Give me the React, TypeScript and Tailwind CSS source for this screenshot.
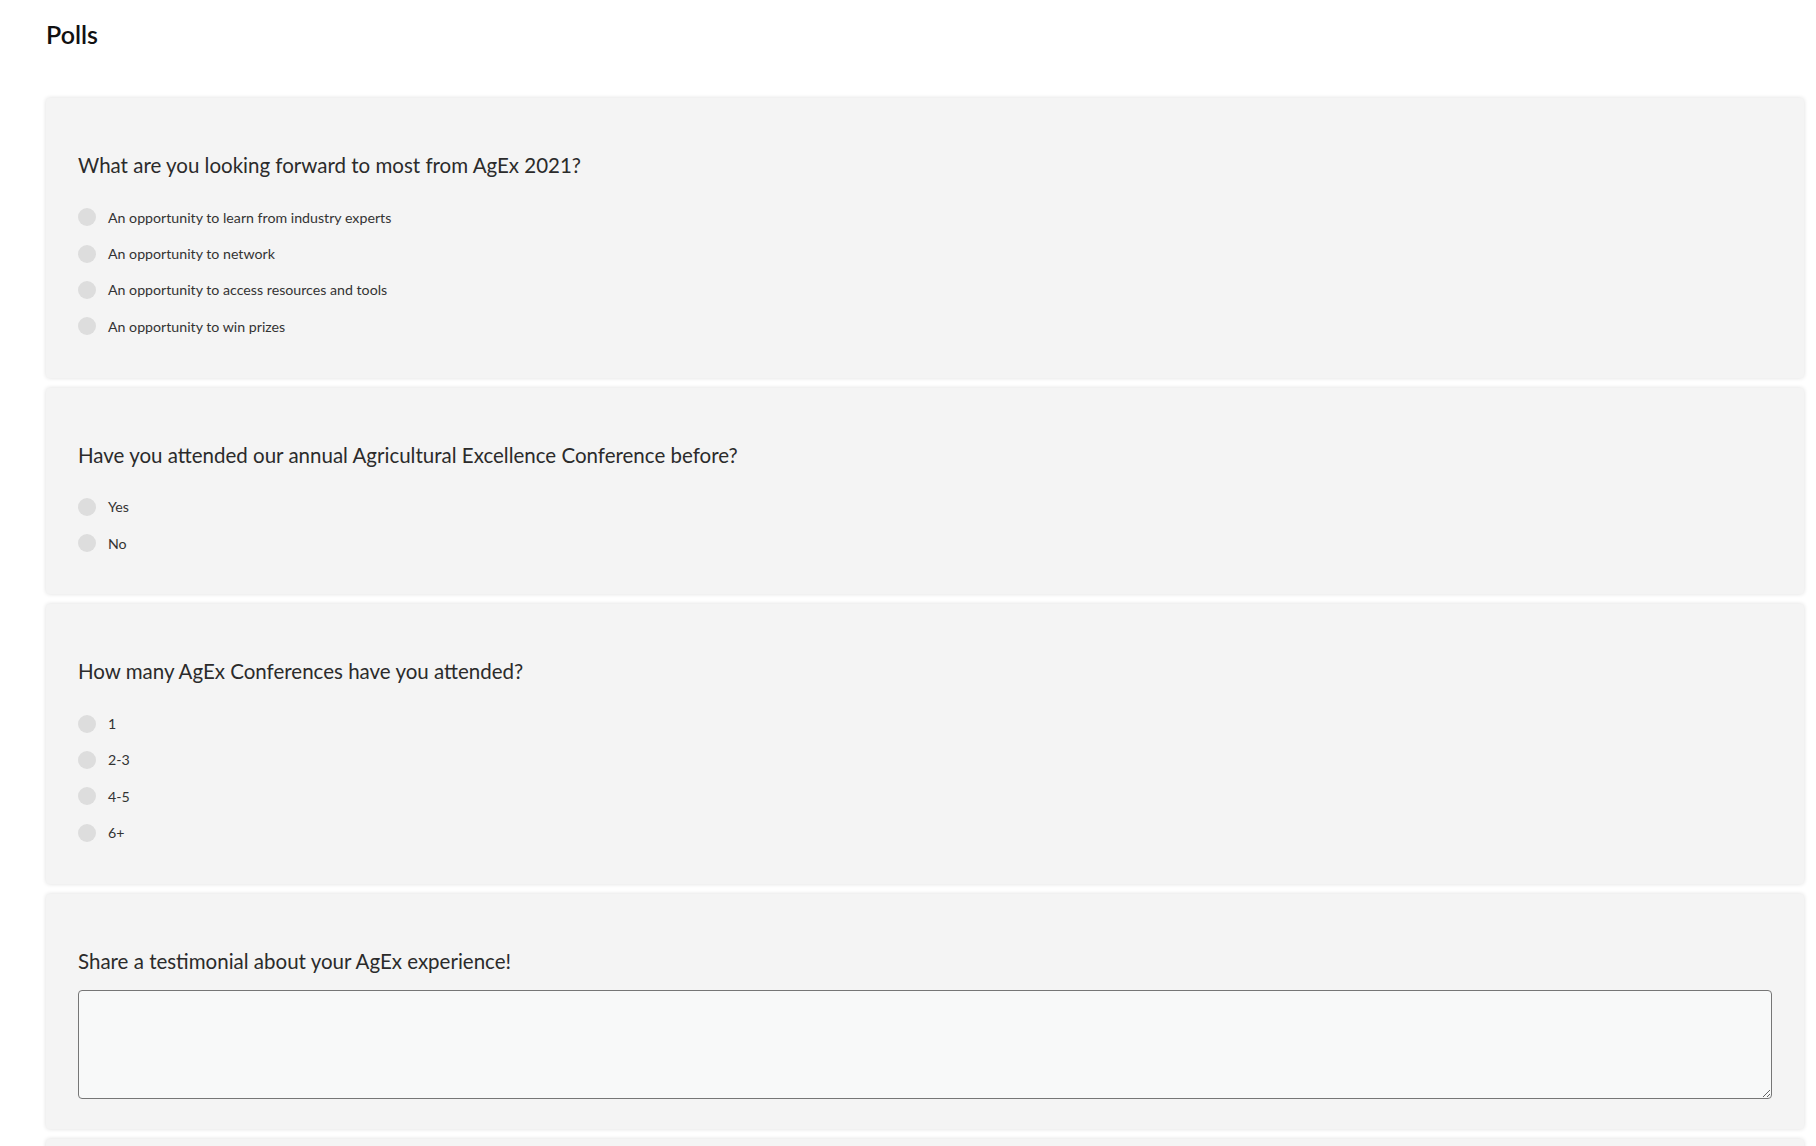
import React from "react";

type Poll = {
  question: string;
  options?: string[];
  text?: boolean;
};

const polls: Poll[] = [
  {
    question: "What are you looking forward to most from AgEx 2021?",
    options: [
      "An opportunity to learn from industry experts",
      "An opportunity to network",
      "An opportunity to access resources and tools",
      "An opportunity to win prizes",
    ],
  },
  {
    question: "Have you attended our annual Agricultural Excellence Conference before?",
    options: ["Yes", "No"],
  },
  {
    question: "How many AgEx Conferences have you attended?",
    options: ["1", "2-3", "4-5", "6+"],
  },
  {
    question: "Share a testimonial about your AgEx experience!",
    text: true,
  },
];

function PollCard({ poll }: { poll: Poll }) {
  return (
    <div
      className={`rounded-[4px] bg-[#f4f4f4] px-[32px] pt-[53px] shadow-[0_0_4px_rgba(0,0,0,0.14)] ${
        poll.text ? "pb-[34px]" : "pb-[33px]"
      }`}
    >
      <h2 className="text-[20.5px] leading-[28px] text-[#2b2b2b]">{poll.question}</h2>

      {poll.options && (
        <div className="mt-[20px] flex flex-col">
          {poll.options.map((opt) => (
            <label key={opt} className="flex h-[36.4px] items-center gap-[12px] cursor-pointer">
              <span className="h-[18px] w-[18px] shrink-0 rounded-full bg-[#dddddd]" />
              <span className="text-[14.2px] text-[#333333]">{opt}</span>
            </label>
          ))}
        </div>
      )}

      {poll.text && (
        <textarea className="mt-[15px] mb-[-4px] block h-[109px] w-full rounded-[4px] border border-[#767676] bg-[#f8f9f9] p-2 text-[14px] outline-none" />
      )}
    </div>
  );
}

export default function App() {
  return (
    <main
      className="min-h-screen bg-white pl-[46px] pr-[12px] pt-[18px] pb-10"
      style={{ fontFamily: "Lato, 'Open Sans', sans-serif" }}
    >
      {/* Title */}
      <h1 className="text-[25px] leading-[32px] font-semibold text-[#111111]">Polls</h1>

      {/* Poll cards */}
      <div className="mt-[48px] flex flex-col gap-[10px]">
        {polls.map((p) => (
          <PollCard key={p.question} poll={p} />
        ))}
        {/* next card, below the fold */}
        <div className="h-[200px] rounded-[4px] bg-[#f4f4f4] shadow-[0_0_4px_rgba(0,0,0,0.14)]" />
      </div>
    </main>
  );
}
